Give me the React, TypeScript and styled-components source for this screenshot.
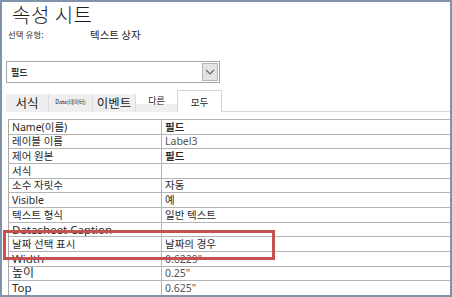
import React from "react";
import styled, { createGlobalStyle } from "styled-components";

const Global = createGlobalStyle`
  html, body { margin: 0; padding: 0; background: #fff; }
  * { box-sizing: border-box; }
`;

const FONT = `"Noto Sans", "Noto Sans CJK KR", sans-serif`;

const Frame = styled.div`
  position: relative;
  width: 452px;
  height: 297px;
  border: 2px solid #8192ab;
  background: #fff;
  font-family: ${FONT};
  color: #222;
  display: flex;
  flex-direction: column;
  overflow: hidden;
`;

const Header = styled.div`
  padding: 0 0 0 6px;
  height: 59px;
`;

const Title = styled.div`
  font-family: "Noto Sans CJK KR", sans-serif;
  font-size: 20px;
  font-weight: 300;
  line-height: 26px;
  height: 25px;
  padding-left: 4px;
  letter-spacing: 0.5px;
  color: #1e1e1e;
`;

const SelRow = styled.div`
  display: flex;
  align-items: center;
  height: 14px;
`;

const SelLabel = styled.span`
  font-family: "Noto Sans CJK KR", sans-serif;
  font-size: 8.5px;
  width: 82px;
  color: #333;
`;

const SelValue = styled.span`
  font-family: "Noto Sans CJK KR", sans-serif;
  font-size: 10.5px;
  color: #222;
`;

const DropRow = styled.div`
  padding-left: 4px;
  height: 29px;
`;

const Dropdown = styled.div`
  width: 214px;
  height: 22px;
  border: 1px solid #a6a6a6;
  display: flex;
  align-items: center;
  justify-content: space-between;
  padding: 0 1px 0 4px;
`;

const DropText = styled.span`
  font-family: "Noto Sans CJK KR", sans-serif;
  font-size: 9px;
  font-weight: 700;
  color: #333;
`;

const DropButton = styled.div`
  width: 16px;
  height: 18px;
  background: #e3e3e3;
  border: 1px solid #b5b5b5;
  display: flex;
  align-items: center;
  justify-content: center;
`;

const TabStrip = styled.div`
  display: flex;
  align-items: flex-end;
  height: 22px;
  padding-left: 4px;
`;

const Tab = styled.div<{ $w: number; $active?: boolean; $fade?: boolean }>`
  width: ${(p) => p.$w}px;
  height: ${(p) => (p.$active ? 22 : 18)}px;
  display: flex;
  align-items: center;
  justify-content: center;
  font-family: "Noto Sans CJK KR", sans-serif;
  color: #222;
  background: ${(p) =>
    p.$active
      ? "#fff"
      : p.$fade
      ? "linear-gradient(#fff 0, #fff 55%, #efefef 55%)"
      : "#efefef"};
  border-left: 1px solid ${(p) => (p.$active ? "#d6d6d6" : "#dcdcdc")};
  border-right: ${(p) => (p.$active ? "1px solid #d6d6d6" : "none")};
  border-top: ${(p) => (p.$active ? "1px solid #d6d6d6" : "none")};
  &:first-child { border-left: none; }
`;

const TabText = styled.span<{ $size: number; $dy?: number }>`
  font-size: ${(p) => p.$size}px;
  line-height: 1;
  position: relative;
  top: ${(p) => p.$dy ?? 0}px;
`;

const TabRule = styled.div`
  flex: 1;
  height: 1px;
  background: #d9d9d9;
  align-self: flex-end;
`;

const Table = styled.div`
  margin: 7px 0 0 6px;
  flex: 1;
  display: grid;
  grid-template-columns: 153px 1fr;
  grid-template-rows: repeat(12, 1fr);
  border-left: 1px solid #a9a9a9;
`;

const Cell = styled.div<{ $value?: boolean }>`
  border-top: 1px solid #b4b4b4;
  border-right: ${(p) => (p.$value ? "none" : "1px solid #b4b4b4")};
  padding-left: 3px;
  display: flex;
  align-items: center;
  overflow: hidden;
  white-space: nowrap;
`;

const CellText = styled.span<{ $size?: number; $grey?: boolean; $bold?: boolean }>`
  font-size: ${(p) => p.$size ?? 10.5}px;
  line-height: 1;
  color: ${(p) => (p.$grey ? "#555" : "#2a2a2a")};
  font-weight: ${(p) => (p.$bold ? 700 : 400)};
`;

const Highlight = styled.div`
  position: absolute;
  left: 1px;
  top: 228px;
  width: 272px;
  height: 30px;
  border: 3px solid #c4514f;
  pointer-events: none;
`;

type Row = {
  name: string;
  value: string;
  nameSize?: number;
  valueGrey?: boolean;
  valueBold?: boolean;
};

const rows: Row[] = [
  { name: "Name(이름)", value: "필드", valueBold: true },
  { name: "레이블 이름", value: "Label3", valueGrey: true },
  { name: "제어 원본", value: "필드", valueBold: true },
  { name: "서식", value: "" },
  { name: "소수 자릿수", value: "자동" },
  { name: "Visible", value: "예" },
  { name: "텍스트 형식", value: "일반 텍스트" },
  { name: "Datasheet Caption", value: "", nameSize: 11.5 },
  { name: "날짜 선택 표시", value: "날짜의 경우" },
  { name: "Width", value: "0.6229\"", nameSize: 11.5, valueGrey: true },
  { name: "높이", value: "0.25\"", nameSize: 12, valueGrey: true },
  { name: "Top", value: "0.625\"", nameSize: 11.5, valueGrey: true },
];

export default function App() {
  return (
    <>
      <Global />
      <Frame>
        <Header>
          <Title>속성 시트</Title>
          <SelRow>
            <SelLabel>선택 유형:</SelLabel>
            <SelValue>텍스트 상자</SelValue>
          </SelRow>
        </Header>
        <DropRow>
          <Dropdown>
            <DropText>필드</DropText>
            <DropButton>
              <svg width="10" height="6" viewBox="0 0 10 6">
                <path d="M1 1 L5 5 L9 1" fill="none" stroke="#666" strokeWidth="1.2" />
              </svg>
            </DropButton>
          </Dropdown>
        </DropRow>
        <TabStrip>
          <Tab $w={42}>
            <TabText $size={12.5}>서식</TabText>
          </Tab>
          <Tab $w={44}>
            <TabText $size={5.5}>Data(데이터)</TabText>
          </Tab>
          <Tab $w={43}>
            <TabText $size={12.5}>이벤트</TabText>
          </Tab>
          <Tab $w={42} $fade>
            <TabText $size={9} $dy={-3}>다른</TabText>
          </Tab>
          <Tab $w={45} $active>
            <TabText $size={9.5} $dy={1}>모두</TabText>
          </Tab>
          <TabRule />
        </TabStrip>
        <Table>
          {rows.map((r, i) => (
            <React.Fragment key={i}>
              <Cell>
                <CellText $size={r.nameSize}>{r.name}</CellText>
              </Cell>
              <Cell $value>
                <CellText $grey={r.valueGrey} $bold={r.valueBold}>
                  {r.value}
                </CellText>
              </Cell>
            </React.Fragment>
          ))}
        </Table>
        <Highlight />
      </Frame>
    </>
  );
}
